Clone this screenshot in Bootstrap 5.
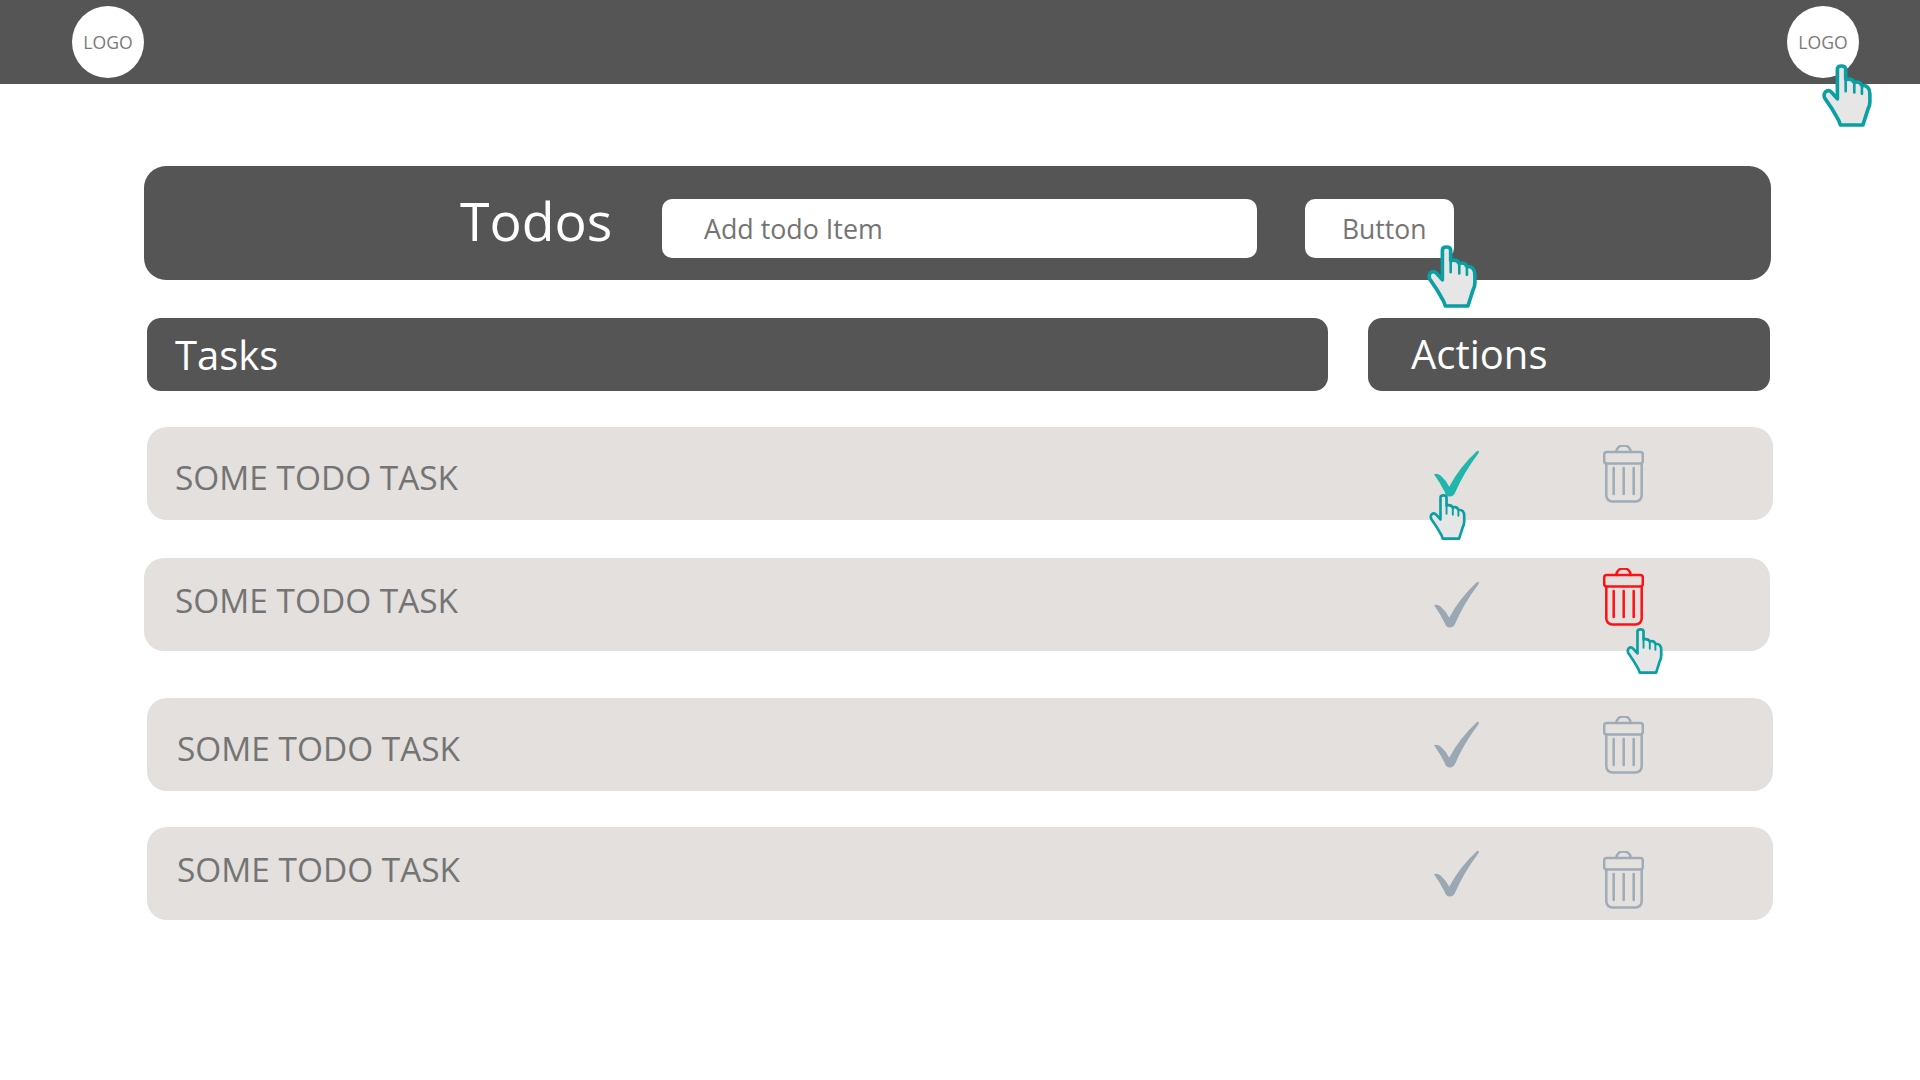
<!DOCTYPE html>
<html lang="en">
<head>
<meta charset="utf-8">
<title>Todos</title>
<link href="https://cdn.jsdelivr.net/npm/bootstrap@5.3.0/dist/css/bootstrap.min.css" rel="stylesheet">
<style>
body{font-family:"Open Sans","Noto Sans",sans-serif;background:#fff;color:#747474;}
.topbar{height:84px;background:#555;padding:6px 61px 0 72px;}
.logo-disc{width:72px;height:72px;border-radius:50%;background:#fff;font-size:17.6px;color:#7a7a7a;}
.hand{position:absolute;width:50px;height:63px;}
.hand-sm{width:37px;height:46px;}
.hand-logo{left:35px;top:58px;}
.hand-btn{left:122px;top:46px;}
.hand-check{left:-5px;top:44px;}
.hand-trash{left:23px;top:60px;}
.page-body{padding:82px 147px 0 144px;}
.todo-head{height:114px;background:#555;border-radius:22px;padding-left:316px;margin-right:2px;}
.todo-title{font-size:53.6px;color:#fff;width:202px;line-height:1;margin:0;font-weight:400;padding-bottom:4px;}
.todo-input{width:595px;height:59px;border-radius:10px;background:#fff;font-size:26.8px;color:#747474;padding:0 42px;margin:11px 48px 0 0;line-height:59px;}
.todo-btn{width:149px;height:59px;border-radius:10px;background:#fff;font-size:26.5px;color:#747474;padding:1px 0 0 37px;margin-top:11px;line-height:59px;}
.col-labels{margin:38px 0 0 3px;}
.col-label{height:73px;background:#555;border-radius:14px;color:#fff;font-size:40px;}
.label-tasks{width:1181px;padding-left:28px;margin-right:40px;}
.label-actions{width:402px;padding-left:43px;padding-bottom:2px;}
.task-row{height:93px;background:#e3e0dd;border-radius:20px;width:1626px;font-size:33.4px;color:#747474;padding-left:28px;}
.shift{margin-left:3px;}
.row-1{margin-top:36px;}.row-2{margin-top:38px;padding-left:31px;}.row-3{margin-top:47px;padding-left:30px;}.row-4{margin-top:36px;padding-left:30px;}
.task-text{flex:1 1 auto;}
.text-dn{padding-top:8px;}.text-up{padding-bottom:8px;}
.check-cell{position:relative;width:45px;height:47px;margin-right:124px;}
.trash-cell{position:relative;width:41px;height:58px;margin-right:129px;}
.row-2 .trash-cell{margin-right:126px;}
.check-cell svg,.trash-cell svg{display:block;}
.check-grey{fill:#9aa8b3;}
.check-on{fill:#22b5ab;}
.trash-art{fill:none;stroke-width:2.5;stroke-linecap:round;stroke-linejoin:round;}
.trash-grey{stroke:#9fabb6;}
.trash-red{stroke:#ff1014;}
.up-1{margin-bottom:1px}.trash-up{margin-bottom:15px;}.trash-dn{margin-top:12px;}
.palm{fill:#e6e6e6;stroke:#0aa0a3;stroke-width:11;stroke-linejoin:round;}
.crease{fill:none;stroke:#0aa0a3;stroke-width:8;stroke-linecap:round;}
</style>
</head>
<body>
<svg width="0" height="0" class="d-block" aria-hidden="true">
  <defs>
    <symbol id="i-hand" viewBox="0 0 150 190">
      <path class="palm" d="M46 105V16Q46 6 58 6Q71 6 71 16V47Q90 42 97 56Q113 50 120 65Q144 64 144 90V115Q144 126 138 137L123 184H55L50 170Q32 136 8 103Q3 92 10 84Q19 76 29 86Z"/>
      <path class="crease" d="M71 47V82M97 56V86M120 65V90"/>
    </symbol>
    <symbol id="i-check" viewBox="0 0 136 140">
      <path d="M0 72Q10 68 20 76Q36 90 46 110Q76 52 130 2Q137 -1 135 8Q88 70 63 130Q56 142 43 139Q36 137 32 125Q20 100 0 72Z"/>
    </symbol>
    <symbol id="i-trash" viewBox="0 0 41 58">
      <rect x="1.2" y="7" width="38.6" height="11.6" rx="2.6"/>
      <path d="M13.5 7C13.5 -1.8 27.5 -1.8 27.5 7"/>
      <path d="M3.3 18.6V50.5A6 6 0 0 0 9.3 56.5H32.7A6 6 0 0 0 38.7 50.5V18.6"/>
      <path d="M10.7 23V49M20.7 23V49M30.7 23V49"/>
    </symbol>
  </defs>
</svg>

<nav class="topbar d-flex justify-content-between align-items-start">
  <div class="logo-disc d-flex align-items-center justify-content-center">LOGO</div>
  <div class="logo-disc d-flex align-items-center justify-content-center position-relative">LOGO
    <svg class="hand hand-logo"><use href="#i-hand"/></svg>
  </div>
</nav>

<main class="page-body">
  <section class="todo-head d-flex align-items-center">
    <h1 class="todo-title">Todos</h1>
    <div class="todo-input">Add todo Item</div>
    <div class="todo-btn position-relative">Button
      <svg class="hand hand-btn"><use href="#i-hand"/></svg>
    </div>
  </section>

  <div class="col-labels d-flex">
    <div class="col-label label-tasks d-flex align-items-center">Tasks</div>
    <div class="col-label label-actions d-flex align-items-center">Actions</div>
  </div>

  <div class="task-row row-1 shift d-flex align-items-center">
    <div class="task-text text-dn">SOME TODO TASK</div>
    <div class="check-cell">
      <svg width="45" height="47" class="check-on"><use href="#i-check"/></svg>
      <svg class="hand hand-sm hand-check"><use href="#i-hand"/></svg>
    </div>
    <div class="trash-cell"><svg width="41" height="58" class="trash-art trash-grey"><use href="#i-trash"/></svg></div>
  </div>

  <div class="task-row row-2 d-flex align-items-center">
    <div class="task-text text-up">SOME TODO TASK</div>
    <div class="check-cell up-1"><svg width="45" height="47" class="check-grey"><use href="#i-check"/></svg></div>
    <div class="trash-cell trash-up">
      <svg width="41" height="58" class="trash-art trash-red"><use href="#i-trash"/></svg>
      <svg class="hand hand-sm hand-trash"><use href="#i-hand"/></svg>
    </div>
  </div>

  <div class="task-row row-3 shift d-flex align-items-center">
    <div class="task-text text-dn">SOME TODO TASK</div>
    <div class="check-cell up-1"><svg width="45" height="47" class="check-grey"><use href="#i-check"/></svg></div>
    <div class="trash-cell"><svg width="41" height="58" class="trash-art trash-grey"><use href="#i-trash"/></svg></div>
  </div>

  <div class="task-row row-4 shift d-flex align-items-center">
    <div class="task-text text-up">SOME TODO TASK</div>
    <div class="check-cell"><svg width="45" height="47" class="check-grey"><use href="#i-check"/></svg></div>
    <div class="trash-cell trash-dn"><svg width="41" height="58" class="trash-art trash-grey"><use href="#i-trash"/></svg></div>
  </div>
</main>

<script src="https://cdn.jsdelivr.net/npm/bootstrap@5.3.0/dist/js/bootstrap.bundle.min.js"></script>
</body>
</html>
